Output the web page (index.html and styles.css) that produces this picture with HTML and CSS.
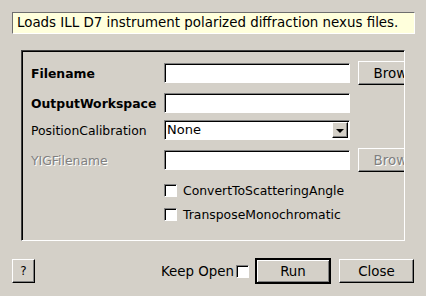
FILE: index.html
```html
<!DOCTYPE html>
<html lang="en">

<head>
    <meta charset="UTF-8">
    <meta name="viewport" content="width=device-width, initial-scale=1.0">
    <title>LoadILLPolarizedDiffraction</title>
    <link rel="stylesheet" href="styles.css">
</head>

<body>
    <div class="desc">Loads ILL D7 instrument polarized diffraction nexus files.</div>

    <div class="frame">
        <div class="props">
            <div class="label bold">Filename</div>
            <div class="field"><input type="text" class="text-input"></div>
            <div class="extra"><button class="btn browse">Browse</button></div>

            <div class="label bold">OutputWorkspace</div>
            <div class="field"><input type="text" class="text-input"></div>
            <div class="extra"></div>

            <div class="label">PositionCalibration</div>
            <div class="field">
                <div class="combo">
                    <span class="combo-text">None</span>
                    <span class="combo-arrow"><span class="tri"></span></span>
                </div>
            </div>
            <div class="extra"></div>

            <div class="label disabled">YIGFilename</div>
            <div class="field"><input type="text" class="text-input"></div>
            <div class="extra"><button class="btn browse disabled">Browse</button></div>

            <div class="label"></div>
            <div class="field wide"><span class="check"></span>ConvertToScatteringAngle</div>

            <div class="label"></div>
            <div class="field wide"><span class="check"></span>TransposeMonochromatic</div>
        </div>
    </div>

    <div class="bottom">
        <button class="btn help">?</button>
        <div class="actions">
            <span class="keep">Keep Open</span>
            <span class="check"></span>
            <button class="btn run">Run</button>
            <button class="btn close">Close</button>
        </div>
    </div>
</body>

</html>
```

FILE: styles.css
```css
body {
    font-family: 'DejaVu Sans', sans-serif;
    font-size: 13.4px;
    color: #000;
    margin: 0;
    padding: 0;
    width: 426px;
    height: 296px;
    background-color: #d4d0c8;
    overflow: hidden;
}

.desc {
    margin: 12px 11px 0 12px;
    height: 22px;
    box-sizing: border-box;
    padding: 0 0 0 4px;
    line-height: 20px;
    background-color: #ffffdc;
    border: 1px solid;
    border-color: #6e6e6e #fff #fff #6e6e6e;
}

.frame {
    margin: 16px 0 0 21px;
    width: 384px;
    height: 191px;
    box-sizing: border-box;
    border: 1px solid;
    border-color: #404040 #fff #fff #404040;
    box-shadow: inset 1px 1px #000;
    overflow: hidden;
    padding: 7px 0 0 9px;
    font-size: 12.4px;
}

.props {
    display: grid;
    grid-template-columns: 133px 186px 88px;
    grid-template-rows: 30px 30px 24px 36px 24px 24px;
    align-items: center;
}

.label {
    color: #000;
    white-space: nowrap;
}

.label.bold {
    font-weight: bold;
}

.label.disabled {
    color: #808080;
    text-shadow: 1px 1px #fff;
}

.field {
    display: flex;
    align-items: center;
}

.field.wide {
    grid-column: 2 / 4;
    white-space: nowrap;
}

.extra {
    padding-left: 8px;
}

.text-input {
    width: 186px;
    height: 20px;
    box-sizing: border-box;
    margin: 0;
    padding: 0 3px;
    font: inherit;
    background-color: #fff;
    border: 1px solid;
    border-color: #808080 #fff #fff #808080;
    box-shadow: inset 1px 1px #000;
    outline: none;
}

.combo {
    width: 186px;
    height: 20px;
    box-sizing: border-box;
    display: flex;
    align-items: center;
    justify-content: space-between;
    background-color: #fff;
    border: 1px solid;
    border-color: #808080 #fff #fff #808080;
    box-shadow: inset 1px 1px #000;
    padding: 1px 1px 1px 2px;
    font-size: 13px;
}

.combo-text {
    line-height: 16px;
}

.combo-arrow {
    width: 16px;
    height: 16px;
    box-sizing: border-box;
    background-color: #d4d0c8;
    border: 1px solid;
    border-color: #fff #000 #000 #fff;
    box-shadow: inset -1px -1px #808080;
    display: flex;
    align-items: center;
    justify-content: center;
}

.tri {
    width: 0;
    height: 0;
    border-left: 4px solid transparent;
    border-right: 4px solid transparent;
    border-top: 4px solid #000;
    margin: 1px 1px 0 0;
}

.btn {
    font: inherit;
    color: #000;
    background-color: #d4d0c8;
    box-sizing: border-box;
    margin: 0;
    padding: 0;
    border: 1px solid;
    border-color: #fff #000 #000 #fff;
    box-shadow: inset -1px -1px #808080;
    cursor: pointer;
}

.browse {
    width: 80px;
    height: 24px;
    font-size: 13.4px;
}

.browse.disabled {
    color: #808080;
    text-shadow: 1px 1px #fff;
}

.check {
    display: inline-block;
    width: 13px;
    height: 13px;
    box-sizing: border-box;
    background-color: #fff;
    border: 1px solid;
    border-color: #808080 #fff #fff #808080;
    box-shadow: inset 1px 1px #000;
    margin-right: 6px;
    flex-shrink: 0;
}

.bottom {
    display: flex;
    justify-content: space-between;
    align-items: center;
    margin: 17px 12px 0 12px;
    height: 26px;
}

.help {
    width: 23px;
    height: 24px;
    font-size: 12px;
}

.actions {
    display: flex;
    align-items: center;
}

.keep {
    margin-right: 2px;
}

.actions .check {
    margin-right: 6px;
}

.run {
    width: 76px;
    height: 26px;
    border: 2px solid;
    border-color: #000;
    box-shadow: inset 1px 1px #fff, inset -1px -1px #808080;
    margin-right: 8px;
}

.close {
    width: 75px;
    height: 24px;
}
```
